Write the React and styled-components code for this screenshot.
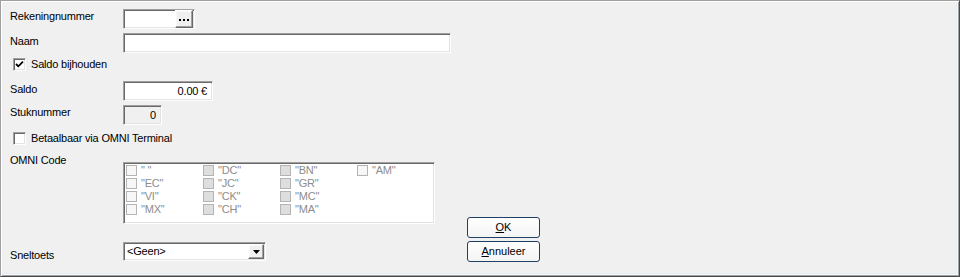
import React from "react";
import styled, { createGlobalStyle, css } from "styled-components";

const Global = createGlobalStyle`
  html, body { margin: 0; padding: 0; background: #f0f0f0; }
  body { font-family: "Liberation Sans", Arial, sans-serif; font-size: 11px; color: #000; }
`;

const Frame = styled.div`
  box-sizing: border-box;
  width: 960px;
  height: 277px;
  background: #f0f0f0;
  border-top: 1px solid #a0a0a0;
  border-left: 1px solid #a0a0a0;
  border-right: 1px solid #4a4a4a;
  border-bottom: 1px solid #4a4a4a;
  box-shadow: inset 1px 1px #ffffff, inset -1px -1px #a0a0a0, inset -2px -2px #f8f8f8, inset -3px -3px #e6ecf4;
  padding: 7px 0 0 9px;
  display: flex;
  flex-direction: column;
  letter-spacing: -0.2px;
`;

const Row = styled.div`
  display: flex;
  align-items: ${(p) => (p.$align ? p.$align : "flex-start")};
  margin-top: ${(p) => p.$mt || 0}px;
  height: ${(p) => (p.$h ? `${p.$h}px` : "auto")};
`;

const Label = styled.div`
  width: 113px;
  flex: none;
  line-height: 13px;
  padding-top: ${(p) => (p.$pt !== undefined ? p.$pt : 1)}px;
  white-space: nowrap;
`;

const sunken = css`
  box-sizing: border-box;
  border: 1px solid;
  border-color: #a0a0a0 #ffffff #ffffff #a0a0a0;
  box-shadow: inset 1px 1px #696969, inset -1px -1px #e3e3e3;
`;

const raised = css`
  box-sizing: border-box;
  background: #f0f0f0;
  border: 1px solid;
  border-color: #ffffff #696969 #696969 #ffffff;
  box-shadow: inset -1px -1px #a0a0a0, inset 1px 1px #f8f8f8;
`;

const Field = styled.div`
  ${sunken};
  width: ${(p) => p.$w}px;
  height: ${(p) => p.$h || 20}px;
  background: ${(p) => (p.$disabled ? "#f0f0f0" : "#ffffff")};
  display: flex;
  align-items: center;
  justify-content: ${(p) => (p.$right ? "flex-end" : "flex-start")};
  padding: 2px ${(p) => (p.$right ? 5 : 2)}px 2px 3px;
  line-height: 13px;
  white-space: nowrap;
`;

const EllipsisButton = styled.div`
  ${raised};
  margin-left: auto;
  margin-right: -1px;
  width: 18px;
  height: 18px;
  display: flex;
  align-items: center;
  justify-content: center;
  gap: 2px;
  padding-top: 2px;
`;

const Dot = styled.span`
  width: 2px;
  height: 2px;
  background: #000;
`;

const CheckRow = styled.label`
  display: flex;
  align-items: center;
  gap: 5px;
  margin-left: 3px;
  margin-top: ${(p) => p.$mt || 0}px;
  height: 13px;
  line-height: 13px;
  white-space: nowrap;
`;

const Box = styled.span`
  ${sunken};
  width: 13px;
  height: 13px;
  flex: none;
  background: #fff;
  display: flex;
  align-items: center;
  justify-content: center;
`;

const Lower = styled.div`
  display: flex;
  margin-top: 9px;
`;

const LeftCol = styled.div`
  display: flex;
  flex-direction: column;
`;

const ListBox = styled.div`
  ${sunken};
  width: 312px;
  height: 62px;
  margin-top: 8px;
  background: #fff;
  padding: 1px 0 0 2px;
  display: grid;
  grid-template-columns: repeat(4, 77px);
  grid-auto-rows: 13px;
  align-content: start;
`;

const ListItem = styled.div`
  display: flex;
  align-items: center;
  gap: 4px;
  color: #8c8c8c;
  line-height: 13px;
  white-space: nowrap;
`;

const SmallBox = styled.span`
  box-sizing: border-box;
  width: 11px;
  height: 11px;
  border: 1px solid #b4b4b4;
  background: ${(p) => (p.$shade ? "#dedede" : "#f7f7f7")};
  flex: none;
`;

const Combo = styled.div`
  ${sunken};
  width: 143px;
  height: 19px;
  background: #fff;
  display: flex;
  align-items: center;
  padding: 2px 1px 2px 3px;
  line-height: 13px;
`;

const ComboText = styled.span`
  flex: 1;
`;

const DropButton = styled.div`
  ${raised};
  width: 16px;
  height: 15px;
  display: flex;
  align-items: center;
  justify-content: center;
`;

const ButtonCol = styled.div`
  display: flex;
  flex-direction: column;
  justify-content: flex-end;
  gap: 3px;
  margin-left: 32px;
`;

const Button = styled.div`
  box-sizing: border-box;
  width: 73px;
  height: 21px;
  border: 1px solid #1e3f66;
  border-radius: 3px;
  background: linear-gradient(#ffffff, #f4f4f4);
  display: flex;
  align-items: center;
  justify-content: center;
  line-height: 13px;
  letter-spacing: 0;
  u { text-decoration: underline; text-underline-offset: 1px; }
`;

const Check = () => (
  <svg width="9" height="9" viewBox="0 0 9 9">
    <path d="M1 4 L3.3 6.3 L8 1.6" fill="none" stroke="#000" strokeWidth="1.8" />
  </svg>
);

const Arrow = () => (
  <svg width="7" height="4" viewBox="0 0 7 4">
    <path d="M0 0 H7 L3.5 4 Z" fill="#000" />
  </svg>
);

const codes = [
  ['" "', false], ['"DC"', true], ['"BN"', true], ['"AM"', false],
  ['"EC"', false], ['"JC"', true], ['"GR"', true], null,
  ['"VI"', false], ['"CK"', true], ['"MC"', true], null,
  ['"MX"', false], ['"CH"', true], ['"MA"', true], null,
];

export default function App() {
  return (
    <>
      <Global />
      <Frame>
        <Row $h={20} $mt={1}>
          <Label>Rekeningnummer</Label>
          <Field $w={72}>
            <EllipsisButton>
              <Dot />
              <Dot />
              <Dot />
            </EllipsisButton>
          </Field>
        </Row>
        <Row $h={20} $mt={4}>
          <Label $pt={2}>Naam</Label>
          <Field $w={328} />
        </Row>
        <CheckRow $mt={5}>
          <Box>
            <Check />
          </Box>
          Saldo bijhouden
        </CheckRow>
        <Row $h={20} $mt={10}>
          <Label $pt={2}>Saldo</Label>
          <Field $w={90} $right>0.00 €</Field>
        </Row>
        <Row $h={20} $mt={4}>
          <Label>Stuknummer</Label>
          <Field $w={39} $right $disabled>0</Field>
        </Row>
        <CheckRow $mt={7}>
          <Box />
          Betaalbaar via OMNI Terminal
        </CheckRow>
        <Lower>
          <LeftCol>
            <Row>
              <Label $pt={0}>OMNI Code</Label>
              <ListBox>
                {codes.map((c, i) =>
                  c ? (
                    <ListItem key={i}>
                      <SmallBox $shade={c[1]} />
                      {c[0]}
                    </ListItem>
                  ) : (
                    <span key={i} />
                  )
                )}
              </ListBox>
            </Row>
            <Row $mt={18} $h={20} $align="flex-start">
              <Label $pt={7}>Sneltoets</Label>
              <Combo>
                <ComboText>&lt;Geen&gt;</ComboText>
                <DropButton>
                  <Arrow />
                </DropButton>
              </Combo>
            </Row>
          </LeftCol>
          <ButtonCol>
            <Button>
              <span><u>O</u>K</span>
            </Button>
            <Button>
              <span><u>A</u>nnuleer</span>
            </Button>
          </ButtonCol>
        </Lower>
      </Frame>
    </>
  );
}
